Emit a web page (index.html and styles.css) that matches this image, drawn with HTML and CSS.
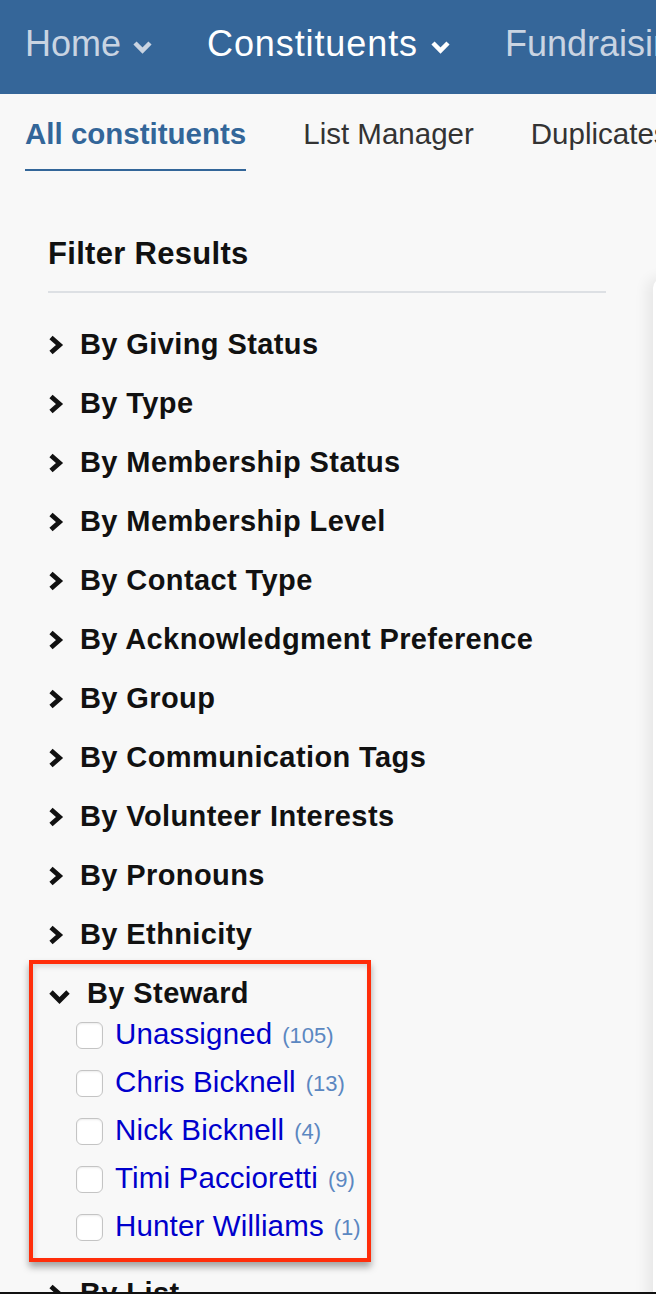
FILE: index.html
```html
<!DOCTYPE html>
<html lang="en">
<head>
<meta charset="utf-8">
<title>Constituents</title>
<link rel="stylesheet" href="styles.css">
</head>
<body>
<header class="topnav">
  <div class="navitem">Home <svg class="navchev" width="21" height="15" viewBox="0 0 21 15"><polyline points="3,3 10.5,10.5 18,3"/></svg></div>
  <div class="navitem active">Constituents <svg class="navchev" width="21" height="15" viewBox="0 0 21 15"><polyline points="3,3 10.5,10.5 18,3"/></svg></div>
  <div class="navitem">Fundraising</div>
</header>
<nav class="subnav">
  <div class="tab current">All constituents</div>
  <div class="tab">List Manager</div>
  <div class="tab">Duplicates</div>
</nav>
<div class="content">
  <aside class="sidebar">
    <h2 class="title">Filter Results</h2>
    <ul class="filters">
      <li class="filter"><svg class="chev" width="16" height="22" viewBox="0 0 16 22"><polyline points="3,3.5 11.5,11 3,18.5"/></svg><span>By Giving Status</span></li>
      <li class="filter"><svg class="chev" width="16" height="22" viewBox="0 0 16 22"><polyline points="3,3.5 11.5,11 3,18.5"/></svg><span>By Type</span></li>
      <li class="filter"><svg class="chev" width="16" height="22" viewBox="0 0 16 22"><polyline points="3,3.5 11.5,11 3,18.5"/></svg><span>By Membership Status</span></li>
      <li class="filter"><svg class="chev" width="16" height="22" viewBox="0 0 16 22"><polyline points="3,3.5 11.5,11 3,18.5"/></svg><span>By Membership Level</span></li>
      <li class="filter"><svg class="chev" width="16" height="22" viewBox="0 0 16 22"><polyline points="3,3.5 11.5,11 3,18.5"/></svg><span>By Contact Type</span></li>
      <li class="filter"><svg class="chev" width="16" height="22" viewBox="0 0 16 22"><polyline points="3,3.5 11.5,11 3,18.5"/></svg><span>By Acknowledgment Preference</span></li>
      <li class="filter"><svg class="chev" width="16" height="22" viewBox="0 0 16 22"><polyline points="3,3.5 11.5,11 3,18.5"/></svg><span>By Group</span></li>
      <li class="filter"><svg class="chev" width="16" height="22" viewBox="0 0 16 22"><polyline points="3,3.5 11.5,11 3,18.5"/></svg><span>By Communication Tags</span></li>
      <li class="filter"><svg class="chev" width="16" height="22" viewBox="0 0 16 22"><polyline points="3,3.5 11.5,11 3,18.5"/></svg><span>By Volunteer Interests</span></li>
      <li class="filter"><svg class="chev" width="16" height="22" viewBox="0 0 16 22"><polyline points="3,3.5 11.5,11 3,18.5"/></svg><span>By Pronouns</span></li>
      <li class="filter"><svg class="chev" width="16" height="22" viewBox="0 0 16 22"><polyline points="3,3.5 11.5,11 3,18.5"/></svg><span>By Ethnicity</span></li>
    </ul>
    <section class="steward">
      <div class="steward-head"><svg class="chevdown" width="23" height="15" viewBox="0 0 23 15"><polyline points="3,3 11.5,11.5 20,3"/></svg><span>By Steward</span></div>
      <label class="option"><span class="box"></span><span class="name">Unassigned</span><span class="count">(105)</span></label>
      <label class="option"><span class="box"></span><span class="name">Chris Bicknell</span><span class="count">(13)</span></label>
      <label class="option"><span class="box"></span><span class="name">Nick Bicknell</span><span class="count">(4)</span></label>
      <label class="option"><span class="box"></span><span class="name">Timi Paccioretti</span><span class="count">(9)</span></label>
      <label class="option"><span class="box"></span><span class="name">Hunter Williams</span><span class="count">(1)</span></label>
    </section>
    <div class="filter after"><svg class="chev" width="16" height="22" viewBox="0 0 16 22"><polyline points="3,3.5 11.5,11 3,18.5"/></svg><span>By List</span></div>
  </aside>
  <main class="card"></main>
</div>
</body>
</html>
```

FILE: styles.css
```css
html, body {
  margin: 0;
  padding: 0;
}
body {
  background: #f8f8f8;
  font-family: "Liberation Sans", Arial, Helvetica, sans-serif;
  height: 1294px;
  overflow: hidden;
}
body::after {
  content: "";
  position: fixed;
  left: 0;
  right: 0;
  bottom: 0;
  height: 2px;
  background: #111;
}
.topnav {
  height: 94px;
  box-sizing: border-box;
  background: #356699;
  display: flex;
  gap: 54px;
  padding: 24px 0 0 25px;
  white-space: nowrap;
  overflow: hidden;
}
.navitem {
  display: flex;
  align-items: center;
  gap: 11px;
  font-size: 36px;
  line-height: 40px;
  height: 40px;
  color: #c9d4e2;
}
.navitem.active {
  color: #fff;
  letter-spacing: 0.9px;
  gap: 12px;
}
.navchev {
  position: relative;
  top: 3px;
}
.navchev polyline {
  fill: none;
  stroke: currentColor;
  stroke-width: 4.5;
}
.subnav {
  height: 78px;
  box-sizing: border-box;
  display: flex;
  gap: 57px;
  padding-left: 25px;
  white-space: nowrap;
  overflow: hidden;
}
.tab {
  margin-top: 22px;
  font-size: 29.5px;
  line-height: 36px;
  height: 36px;
  padding-bottom: 17px;
  color: #333;
}
.tab.current {
  color: #336699;
  font-weight: bold;
  border-bottom: 2px solid #336699;
}
.content {
  display: flex;
  align-items: flex-start;
}
.sidebar {
  width: 558px;
  flex: none;
  padding: 62px 0 0 48px;
}
.title {
  margin: 0;
  font-size: 31px;
  line-height: 40px;
  font-weight: bold;
  letter-spacing: 0.3px;
  color: #111;
  padding-bottom: 17px;
  border-bottom: 2px solid #dde0e4;
}
.filters {
  list-style: none;
  margin: 34px 0 0;
  padding: 0;
  display: flex;
  flex-direction: column;
  gap: 25px;
}
.filter {
  display: flex;
  align-items: center;
  height: 34px;
  font-size: 29px;
  line-height: 34px;
  font-weight: bold;
  letter-spacing: 0.4px;
  color: #111;
  white-space: nowrap;
}
.chev {
  flex: none;
  margin-right: 16px;
  position: relative;
  top: 1px;
}
.chev polyline, .chevdown polyline {
  fill: none;
  stroke: #111;
  stroke-width: 4.8;
}
.steward {
  margin: 9px 0 0 -19px;
  width: 342px;
  box-sizing: border-box;
  border: 4px solid #ff2d0a;
  padding: 12px 0 8px 15px;
  box-shadow: 0 5px 7px rgba(0, 0, 0, 0.35), inset 2px 3px 5px rgba(0, 0, 0, 0.12);
}
.steward-head {
  display: flex;
  align-items: center;
  height: 34px;
  font-size: 29px;
  line-height: 34px;
  font-weight: bold;
  letter-spacing: 0.4px;
  color: #111;
  white-space: nowrap;
}
.chevdown {
  flex: none;
  margin-right: 16px;
  position: relative;
  top: 3px;
}
.option {
  display: flex;
  align-items: center;
  height: 48px;
  padding-left: 28px;
  white-space: nowrap;
}
.box {
  flex: none;
  width: 25px;
  height: 25px;
  border: 1px solid #c4c4c4;
  border-radius: 6px;
  background: #fff;
  box-shadow: inset 0 1px 2px rgba(0, 0, 0, 0.08);
  margin-right: 12px;
  position: relative;
  top: 1px;
}
.name {
  font-size: 29.5px;
  line-height: 36px;
  letter-spacing: 0.15px;
  color: #0000cc;
}
.count {
  font-size: 22px;
  color: #5b87c1;
  margin-left: 10px;
  position: relative;
  top: 2px;
}
.filter.after {
  margin-top: 14px;
}
.card {
  flex: none;
  width: 400px;
  height: 1100px;
  margin: 106px 0 0 47px;
  background: #fff;
  border-top-left-radius: 10px;
  box-shadow: -6px 0 14px rgba(0, 0, 0, 0.07);
}
```
